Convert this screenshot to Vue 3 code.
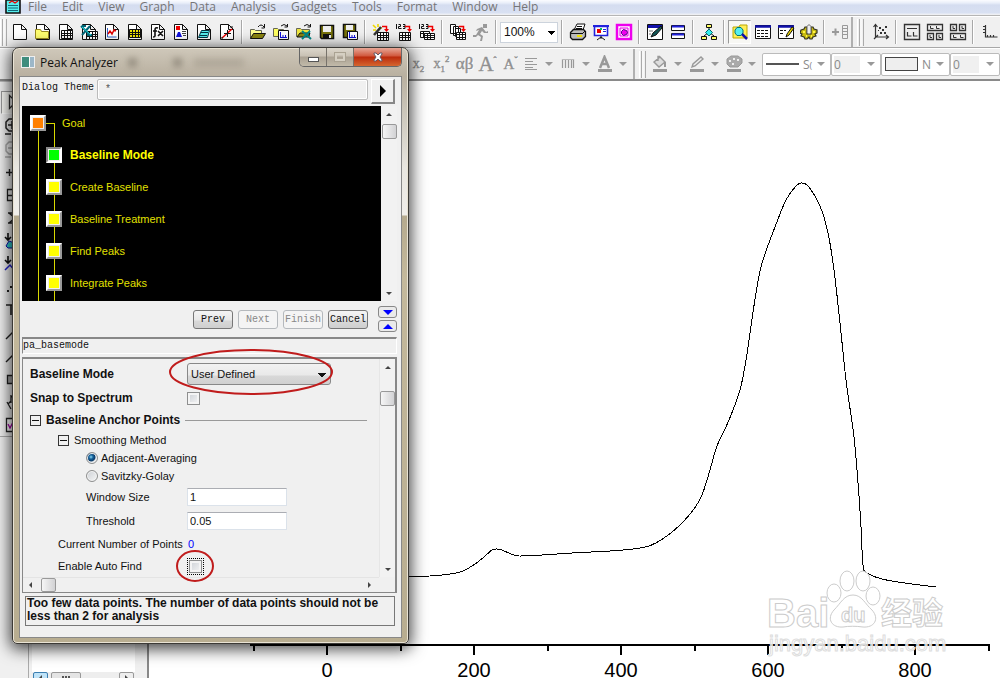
<script setup>
import { h, ref } from 'vue'

const K = '#111'
const G = '#999'
const page = ['M2.5 1.5h8l5 5v10h-13z M10.5 1.5v5h5', '#fff', K]
const grid = (x, y, f) => [`M${x} ${y}h11v8h-11z M${x} ${y + 3}h11 M${x} ${y + 5}h11 M${x + 3} ${y}v8 M${x + 6} ${y}v8 M${x + 9} ${y}v8`, f || '#fff', K]
const redArrow = [['M10 3.500h4.500v4', 'none', '#e00', 1.5], ['M12 6h5l-2.500 3z', '#e00', 'none']]

const icons = {
  page: [page],
  folderPage: [page, ['M1.500 6.500h5l1 2h7v7h-13z', '#ffff70', '#998a20']],
  book: [page, grid(4.5, 7.5)],
  excel: [page, grid(6.5, 8.500), ['M1 3l10 10 M10 3l-8 9 M2 3h4 M7 12h5', 'none', '#067', 2], ['M2 4l9 8', 'none', '#2dd']],
  graph: [page, ['M4.500 5v9h9', 'none', '#36c'], ['M5 11l2-3 2 3 2-4 2 1', 'none', '#d00', 1.5]],
  matrix: [page, grid(3.5, 6.500, '#f5e800')],
  func: [page, ['M9 5q-3-1-3 2v6q0 1-2 1 M4 8h4 M9 8l5 5 M14 8l-5 5', 'none', K, 1.6]],
  layout: [page, ['M4 3h4v4h-4z', '#e00', 'none'], ['M4 14l2-5h2l2 5z', '#11d', 'none'], ['M10 8.500h4 M10 10.500h4 M11 12.500h3', 'none', '#444']],
  notes: [page, ['M6.500 7.500h8l-2 7h-9z M6 9.500h7 M5 12.500h7', '#5ee', '#034']],
  digit: [page, ['M4 15l10-9', 'none', '#e00', 1.5], ['M9.500 7v7 M6 10.500h7 M3 15h2 M12 4h3', 'none', K]],
  open: [['M1.500 15.500v-9h4l1 1h6v3', '#ffff90', '#665'], ['M1.500 15.500l3-5h12l-3 5z', '#8a8410', K], ['M9 4q3-4 6 0 M15.500 1v4h-3', 'none', K]],
  openGraph: [['M1.500 13.500v-8h4l1 1h5v7z', '#ffff60', '#665'], ['M9 3q3-3 6 0 M15.500 1v3h-3', 'none', K], ['M6.500 7.500h10v9h-10z', '#fff', K], ['M8 14.500h7 M8.500 9v5 M11 14v-2 M13.500 14v-2', 'none', '#11d']],
  openExcel: [['M1.500 13.500v-8h4l1 1h8v7z', '#eee640', '#665'], ['M9 3q3-3 6 0 M15.500 1v3h-3', 'none', K], ['M2 14l3-4h10l-2 4z', '#8a8410', K], ['M7 8l9 8 M15 8l-8 8', 'none', '#088', 2]],
  save: [['M2.500 2.500h13v13h-12l-1-1z', '#77720a', K, 1.5], ['M5 3h8v6h-8z', '#eee', 'none'], ['M5 11h8v5h-8z', K, 'none'], ['M11 12h2v3h-2z', '#eee', 'none']],
  saveGraph: [['M2.500 1.500h12v13h-12z', '#77720a', K, 1.5], ['M5 2h7v5h-7z', '#eee', 'none'], ['M6.500 8.500h10v8h-10z', '#fff', K], ['M8 14.500h7 M8.500 9v5 M11 14v-2 M13.500 14v-2', 'none', '#11d']],
  wizard: [['M1 2l3 3 M6 1v3 M1 7h3 M8 5h2', 'none', '#eed800', 1.6], ['M2 12l7-8', 'none', '#333', 2.5], ...redArrow, grid(5.5, 9.500)],
  ascii: [['M1.500 1v5 M3.500 1.500h2v2h-2v2h3 M8 1.500h2v4h-2 M8 3.500h2', 'none', K, 1], ...redArrow, grid(4.5, 9.500)],
  asciiMulti: [['M1.500 1v5 M3.500 1.500h2v2h-2v2h3 M8 1.500h2v4h-2 M8 3.500h2', 'none', K, 1], ...redArrow, ['M2.500 8.500h9v6h-9z M2 10.500h9 M5.500 8v6', '#fff', K], ['M6.500 10.500h10v6h-10z M6 12.500h10 M6 14.500h10 M9.500 10v6 M12.500 10v6', '#fff', K]],
  batch: [['M1.500 1.500h5v9h-5z M4.500 3.500h5v9h-5z M6.500 5.500h5v8h-5z', '#fff', K], ...redArrow, ['M7.500 9.500h9v7h-9z M7 11.500h9 M7 14.500h9 M10.500 9v7 M13.500 9v7', '#fff', K]],
  runner: [['M11 1h4v4h-4z M5 6l5-2 4 5 2-1v2h-4l-2-2-2 3 3 2-1 5H8l1-4-3-2-2 2H1v-2h3l3-5-3 1z', '#999', 'none']],
  printer: [['M5 7l3-6h8l-2 6', '#fff', K], ['M1.500 9.500l3-3h10l2 2v5l-3 3h-10l-2-2z', '#bbb', K, 1.3], ['M8 3.500h5 M7 5.500h6 M2 10.500h12 M14 10l2-2', 'none', K], ['M8 12h5v2h-5z', '#eee200', 'none']],
  slides: [['M1 2h16v2h-16z', '#22d', 'none'], ['M2.500 3.500h13v9h-13z', '#fff', '#22d', 1.6], ['M5 6h4v4h-4z', '#e00', 'none'], ['M8 5h2v2h-2z', '#0b6', 'none'], ['M11 6.500h3 M11 8.500h3', 'none', '#22d'], ['M9 13v3 M5 17l4-3 4 3', 'none', K]],
  magenta: [['M2 2h14v14h-14z', '#fff', '#e0e', 2.500], ['M5 5h8v8h-8z', '#fdf', '#e0e'], ['M8.500 6.500l3 1 1 2-1 2-3 1-2-2v-2z', '#e0e', '#508']],
  codeEdit: [['M1.500 1.500h15v15h-15z', '#fff', K], ['M2 2h14v3h-14z', '#11a', 'none'], ['M5 14l2-4 8-7 1 2-6 7z', '#155', K], ['M3 8h4 M3 11h2', 'none', '#777']],
  rows: [['M2.500 2.500h13v5h-13z M2.500 10.500h13v5h-13z', '#fff', K], ['M3 3.500h12 M3 11.500h12', 'none', '#22d', 2]],
  tree: [['M9 5v4 M9 9l-5 4 M9 9l5 4', 'none', K], ['M6.500 1.500h5v3h-5z M1.500 13.500h5v3h-5z M11.500 13.500h5v3h-5z', '#ff6', K], ['M9 6l3.500 3.500-3.500 3.500-3.500-3.500z', '#3ee', '#066']],
  explorer: [['M2 4h6l1-2h7v13h-14z', '#ffee55', '#bba800'], ['M6 4.500h4l2 2.500v3l-2 2.500h-4l-2-2.500v-3z', '#5ee', '#077'], ['M11 11l5 5', 'none', '#11a', 2.500]],
  results: [['M1.500 2.500h15v13h-15z', '#fff', K], ['M1 3.500h16', 'none', '#11a', 2.500], ['M3 7.500h12 M3 10.500h12 M3 13.500h12', 'none', K, 1, '3 1']],
  command: [['M1.500 2.500h15v13h-15z', '#fff', K], ['M1 3.500h16', 'none', '#11a', 2.500], ['M3 7.500h6 M3 10.500h4', 'none', K, 1, '3 1'], ['M9 14l1-3 5-7 2 1-5 7z', '#eed800', K]],
  gear: [['M1 7l3-1 1-2h2v7h4v-7h2l1 2 3 1v3l-2 1 1 2-3 1-1 2h-2l-1-2-2 2h-2l-1-2-3-1 1-2-2-1z', '#c9bc10', '#332', 1.2], ['M7 3.500l2-2 2 2v6l-2 2-2-2z', '#eee', '#666'], ['M4 8v2 M14 8v2 M6 13h1 M11 13h1', 'none', '#fff44a', 2]],
  addCol: [['M1 9h7 M4.500 5.500v7', 'none', G, 2], ['M11.500 2.500h5v13h-5z M11 5.500h5 M11 8.500h5 M11 11.500h5', 'none', G]],
  scatter: [['M3.500 2v12h13 M1.500 4l2-2.500 2 2.500 M14 12l2.500 2-2.500 2 M2 16l4-4', 'none', '#333', 1.2], ['M7 4h2v2h-2z M10 6h2v2h-2z M13 3h2v2h-2z M8 9h2v2h-2z M12 9h2v2h-2z M6 7h1v1h-1z', '#333', 'none']],
  panel1: [['M1.500 1.500h15v15h-15z', '#eee', '#333', 1.4], ['M4 5.500h10 M4.500 9v4h4 M10.500 9v4h4', 'none', '#333', 1.2]],
  panel4: [['M1.500 1.500h15v6h-15z M1.500 10.500h6v6h-6z M10.500 10.500h6v6h-6z', '#eee', '#333', 1.3], ['M4.500 3v2.500h3 M10.500 3v2.500h3 M4 12v2.500h2 M13 12v2.500h2', 'none', '#333']],
  panel6: [['M1.500 1.500h6v6h-6z M10.500 1.500h6v6h-6z M1.500 10.500h15v6h-15z', '#eee', '#333', 1.3], ['M4 3v2.500h2 M13 3v2.500h2 M4.500 12v2.500h3 M11.500 12v2.500h3', 'none', '#333']],
  axis: [['M5.500 2v12h12 M3 3.500h2 M3 6.500h2 M3 9.500h2 M7.500 14v-2 M10.500 14v-2 M13.500 14v-2', 'none', '#333', 1.2]],
  app: [['M2 0h14v13h-14z', '#5ee', K, 1.6], ['M4 8h10 M4 10.500h10 M4 5.500h10', 'none', '#167'], ['M5 3l3-2 3 2 3-2', 'none', '#e00', 1.3]],
  align: [['M3 3.500h12 M3 6.500h8 M3 9.500h12 M3 12.500h8 M3 14.500h12', 'none', G]],
  barcode: [['M3.500 4v9 M6.500 4v9 M9.500 4v9 M12.500 4v9 M14.500 4v9', 'none', G, 1.2], ['M3 4.500h12', 'none', '#bbb']],
  fontColor: [['M2 14h14v3h-14z', G, 'none'], ['M4 13l4.500-11 4.500 11 M6 9h5', 'none', G, 2.500]],
  bucket: [['M2 14h14v3h-14z', G, 'none'], ['M3 7l6-5 5 5-6 5z M7 6V1.500h2', '#ddd', G, 1.4], ['M14 7v5', 'none', G, 2]],
  pencil: [['M2 14h14v3h-14z', G, 'none'], ['M4 12l1-3 8-7 2 2-8 7z', '#eee', G, 1.4]],
  palette: [['M2 14h14v3h-14z', G, 'none'], ['M2 4l4-3h7l4 3v4l-4 4h-8l-3-3z', '#aaa', G], ['M4 5h2v2h-2z M8 3h2v2h-2z M12 4h2v2h-2z M7 8h2v2h-2z', '#eee', 'none']],
  t0: [['M5.500 1.500v13l3-3 2 5 2-1-2-5h4z', '#fff', '#333', 1.3]],
  t1: [['M4 8h8 M8 4v8 M5 2h6l3 3v6l-3 3h-6l-3-3v-6z M1 17h6', 'none', '#222', 1.5]],
  t2: [['M4 8h8 M5 2h6l3 3v6l-3 3h-6l-3-3v-6z M1 17h6', 'none', '#aaa', 1.5]],
  t3: [['M2 9.500h14 M5.500 6v7', 'none', '#222', 1.4]],
  t4: [['M3.500 3.500h12v11h-12z M4 9.500h9', 'none', '#222', 1.3]],
  t5: [['M5 4l6 5-6 5 M4 4h4 M4 14h4', 'none', '#222', 1.6]],
  t6: [['M4 1v7 M1 5l3 3 3-3', 'none', '#111', 1.6], ['M2 14l3-5 8 3-4 4h-5z', '#3cc', '#11a']],
  t7: [['M4 1v7 M1 5l3 3 3-3', 'none', '#111', 1.6], ['M1 15l5-5 6 7', 'none', '#22c', 1.5]],
  t8: [['M3 12h2v2h-2z M6 8h2v2h-2z M12 10h2v2h-2z', '#222', 'none']],
  t9: [['M2 4h14 M7 4v10', 'none', '#222', 1.6]],
  t10: [['M2 15l12-12', 'none', '#222', 1.5]],
  t11: [['M3.500 5.500h12v8h-12z', '#aaa', '#222', 1.3]],
  t12: [['M3 9l4 7 M7 2v8 M7 4l4-1v6 M4 11l3-3', 'none', '#222', 1.3]],
  t13: [['M2.500 2.500h13v13h-13z', '#fff', '#222', 1.3], ['M4 8l2 4 3-6 3 5', 'none', '#a0a', 1.3]],
}

const Icon = (props) =>
  h('svg', { viewBox: '0 0 18 18', width: 18, height: 18, 'aria-hidden': 'true' },
    icons[props.name].map(([d, f, s, w, dash]) =>
      h('path', { d, fill: f, stroke: s, 'stroke-width': w || 1, 'stroke-dasharray': dash })))
Icon.props = ['name']

const menus = ['File', 'Edit', 'View', 'Graph', 'Data', 'Analysis', 'Gadgets', 'Tools', 'Format', 'Window', 'Help']
const barA = ['page', 'folderPage', 'book', 'excel', 'graph', 'matrix', 'func', 'layout', 'notes', 'digit', '|', 'open', 'openGraph', 'openExcel', 'save', 'saveGraph', '|', 'wizard', 'ascii', 'asciiMulti', '|', 'batch', 'runner', '|']
const barB = ['|', 'printer', 'slides', 'magenta', '|', 'codeEdit', 'rows', '|', 'tree', '|', 'explorer', 'results', 'command', 'gear', '|', 'addCol', '||', 'scatter', '|', 'panel1', 'panel4', 'panel6', '|', 'axis']
const tools = ['t0', 't1', 't2', 't3', 't4', 't5', 't6', 't7', 't8', 't9', 't10', 't10', 't11', 't12', 't13']
const steps = ['Create Baseline', 'Baseline Treatment', 'Find Peaks', 'Integrate Peaks']

const theme = ref('*')
const size = ref('1')
const threshold = ref('0.05')
const method = ref('adjacent')

const samples = [[409, 576], [430, 576], [450, 574], [463, 571], [475, 564], [484, 557], [492, 550], [497, 549], [502, 550], [511, 554], [519, 556], [542, 555], [572, 553], [610, 551], [633, 549], [649, 546], [664, 538], [679, 526], [694, 509], [702, 495], [710, 470], [717, 446], [729, 420], [740, 390], [746, 360], [750, 333], [756, 293], [762, 263], [775, 227], [786, 200], [796, 186], [802, 183], [809, 187], [820, 206], [828, 233], [834, 270], [840, 323], [846, 380], [854, 437], [858, 483], [861, 527], [863, 565], [867, 573], [882, 579], [905, 583], [936, 587]]
const trace = samples.slice(0, -1).map((p1, i) => {
  const p0 = samples[i - 1] || p1
  const p2 = samples[i + 1]
  const p3 = samples[i + 2] || p2
  const c = (a, b, m, sign) => (m + (sign * (b - a)) / 6).toFixed(1)
  return `${i ? '' : `M${p1[0]} ${p1[1]}`}C${c(p0[0], p2[0], p1[0], 1)} ${c(p0[1], p2[1], p1[1], 1)} ${c(p1[0], p3[0], p2[0], -1)} ${c(p1[1], p3[1], p2[1], -1)} ${p2[0]} ${p2[1]}`
}).join('')
const ticks = [['0', 327], ['200', 474], ['400', 621], ['600', 768], ['800', 915]]
const minor = [254, 401, 548, 695, 842, 989]
</script>

<template>
  <div class="app">
    <nav class="menu">
      <Icon name="app" />
      <button v-for="m in menus" :key="m" type="button">{{ m }}</button>
    </nav>

    <div class="bar">
      <span class="grip"></span>
      <template v-for="(n, i) in barA" :key="i">
        <span v-if="n === '|'" class="sep"></span>
        <button v-else type="button" class="tool" :aria-label="n"><Icon :name="n" /></button>
      </template>
      <select class="zoom" aria-label="Zoom"><option>100%</option></select>
      <template v-for="(n, i) in barB" :key="i">
        <span v-if="n === '|'" class="sep"></span>
        <span v-else-if="n === '||'" class="break"><span class="grip"></span></span>
        <button v-else type="button" class="tool" :class="{ on: n === 'explorer' }" :aria-label="n"><Icon :name="n" /></button>
      </template>
    </div>

    <div class="bar format">
      <div class="lead"><span class="grip"></span></div>
      <button type="button" class="tool glyph">x<sub>2</sub></button>
      <button type="button" class="tool glyph">x<sub>1</sub><sup>2</sup></button>
      <button type="button" class="tool glyph greek">αβ</button>
      <button type="button" class="tool glyph big">A<sup>ˆ</sup></button>
      <button type="button" class="tool glyph mid">A<sup>ˇ</sup></button>
      <button type="button" class="tool drop" aria-label="Align"><Icon name="align" /></button>
      <button type="button" class="tool drop" aria-label="Pattern"><Icon name="barcode" /></button>
      <button type="button" class="tool drop" aria-label="Font color"><Icon name="fontColor" /></button>
      <span class="break"><span class="grip"></span></span>
      <button type="button" class="tool drop" aria-label="Fill"><Icon name="bucket" /></button>
      <button type="button" class="tool drop" aria-label="Line color"><Icon name="pencil" /></button>
      <button type="button" class="tool drop" aria-label="Palette"><Icon name="palette" /></button>
      <button type="button" class="combo wide"><i class="rule"></i><span>S<small>(</small></span></button>
      <button type="button" class="combo"><span class="num">0</span></button>
      <button type="button" class="combo wide"><i class="swatch"></i><span>N</span></button>
      <button type="button" class="combo"><span class="num">0</span></button>
    </div>

    <main class="work">
      <div class="side">
        <div class="tools">
          <button v-for="(t, i) in tools" :key="i" type="button" class="tool" :class="{ on: i === 0 }" aria-label="Tool"><Icon :name="t" /></button>
        </div>
      </div>
      <div class="tree-pane">
        <div class="pane">
          <div class="hbar">
            <button type="button" class="blue" aria-label="Left"><i class="left"></i></button>
            <span class="knob"></span>
            <button type="button" aria-label="Right"><i class="right"></i></button>
          </div>
        </div>
      </div>
      <svg class="plot" viewBox="149 81 851 597" preserveAspectRatio="xMinYMin meet">
        <path :d="trace" class="trace" />
        <path d="M250 645H990" class="axis" />
        <path v-for="x in minor" :key="x" :d="`M${x} 645v6`" class="axis" />
        <g v-for="[t, x] in ticks" :key="t">
          <path :d="`M${x} 645v10`" class="axis" />
          <text :x="x" y="677" class="tick">{{ t }}</text>
        </g>
        <g class="mark">
          <text x="767" y="627" class="bai">Bai</text>
          <ellipse cx="834" cy="593" rx="7" ry="9" />
          <ellipse cx="847" cy="581" rx="7" ry="10" />
          <ellipse cx="863" cy="581" rx="7" ry="10" />
          <ellipse cx="873" cy="596" rx="7" ry="9" />
          <path d="M853 595c9 0 12 9 19 15 8 9 2 18-9 17-7-1-14-1-20 0-11 1-17-8-9-17 7-7 10-15 19-15z" />
          <text x="841" y="622" class="du">du</text>
          <text x="881" y="624" class="cn">经验</text>
          <text x="769" y="651" class="url">jingyan.baidu.com</text>
        </g>
      </svg>
    </main>

    <section class="dialog" role="dialog" aria-label="Peak Analyzer">
      <header class="title">
        <i class="logo"></i>
        <h1>Peak Analyzer</h1>
        <div class="ghost"><i></i><i></i><i></i></div>
        <div class="win">
          <button type="button" aria-label="Minimize"><i class="min"></i></button>
          <button type="button" aria-label="Maximize"><i class="max"></i></button>
          <button type="button" class="close" aria-label="Close">
            <svg viewBox="0 0 12 10" width="12" height="10"><path d="M2 1h2l2 2 2-2h2v1L8 5l2 3v1H8L6 7 4 9H2V8l2-3-2-3z" fill="#fff" stroke="#645a68" /></svg>
          </button>
        </div>
      </header>
      <div class="body">
        <div class="theme">
          <label for="theme">Dialog Theme</label>
          <input id="theme" v-model="theme" type="text" />
          <button type="button" aria-label="Theme menu"><i></i></button>
        </div>
        <div class="nav">
          <div class="steps">
            <div class="step root"><button type="button" class="node orange" aria-label="Goal"></button><span>Goal</span></div>
            <div class="step"><button type="button" class="node green" aria-label="Baseline Mode"></button><b>Baseline Mode</b></div>
            <div v-for="s in steps" :key="s" class="step"><button type="button" class="node" :aria-label="s"></button><span>{{ s }}</span></div>
          </div>
          <div class="vscroll"><i class="up"></i><i class="thumb"></i><i class="down"></i></div>
        </div>
        <div class="actions">
          <button type="button">Prev</button>
          <button type="button" disabled>Next</button>
          <button type="button" disabled>Finish</button>
          <button type="button">Cancel</button>
          <div class="pair">
            <button type="button" aria-label="Down"><i class="d"></i></button>
            <button type="button" aria-label="Up"><i class="u"></i></button>
          </div>
        </div>
        <div class="status">pa_basemode</div>
        <div class="panel">
          <form class="form">
            <div class="row r26"><label for="mode" class="strong">Baseline Mode</label>
              <div class="field"><select id="mode"><option>User Defined</option></select>
                <svg class="ring" viewBox="0 0 166 48" width="166" height="48"><ellipse cx="83" cy="24" rx="81" ry="22" /></svg></div></div>
            <div class="row r22"><label for="snap" class="strong">Snap to Spectrum</label><div class="field"><input id="snap" type="checkbox" /></div></div>
            <div class="row r22 section"><button type="button" class="fold" aria-label="Collapse"></button><b>Baseline Anchor Points</b><hr /></div>
            <div class="row r18 in1 section"><button type="button" class="fold" aria-label="Collapse"></button><span>Smoothing Method</span></div>
            <div class="row r18 in2"><input id="adj" v-model="method" type="radio" value="adjacent" /><label for="adj">Adjacent-Averaging</label></div>
            <div class="row r18 in2"><input id="sav" v-model="method" type="radio" value="savitzky" /><label for="sav">Savitzky-Golay</label></div>
            <div class="row r24 in2"><label for="size">Window Size</label><div class="field"><input id="size" v-model="size" type="text" /></div></div>
            <div class="row r24 in2"><label for="thr">Threshold</label><div class="field"><input id="thr" v-model="threshold" type="text" /></div></div>
            <div class="row r22 in1"><span>Current Number of Points</span><div class="field count">0</div></div>
            <div class="row r22 in1"><label for="auto">Enable Auto Find</label>
              <div class="field"><span class="focus"><input id="auto" type="checkbox" /></span>
                <svg class="ring small" viewBox="0 0 40 32" width="40" height="32"><ellipse cx="20" cy="16" rx="18" ry="15" /></svg></div></div>
          </form>
          <div class="vscroll low"><i class="up"></i><i class="thumb"></i><i class="down"></i></div>
          <div class="hscroll"><i class="left"></i><i class="thumb"></i><i class="right"></i></div>
        </div>
        <p class="message">Too few data points. The number of data points should not be less than 2 for analysis</p>
      </div>
    </section>
  </div>
</template>

<style>
html, body, #app { height: 100%; margin: 0; }
body { overflow: hidden; }
</style>

<style scoped>
.app { position: relative; height: 100%; display: flex; flex-direction: column; overflow: hidden; background: #f0f0f0; font: 11px "Liberation Sans", sans-serif; color: #111; }
.app * { box-sizing: border-box; }
button { font: inherit; color: inherit; padding: 0; margin: 0; border: 0; background: none; }
input, select { font: inherit; color: inherit; margin: 0; }
svg { display: block; flex: none; }

.menu { flex: none; height: 16px; padding-left: 4px; display: flex; align-items: flex-start; background: linear-gradient(#fbfcff 0, #e9eef9 3px, #d5ddf0 5px, #d9e1f2 13px, #eceff6 14px, #f0f0f0 15px); border-bottom: 1px solid #b5b5b5; }
.menu svg { margin-right: 6px; }
.menu button { height: 14px; margin-right: 15px; font: 12px/14px "Open Sans", sans-serif; color: #757577; }

.bar { flex: none; height: 32px; display: flex; align-items: center; background: #f0f0f0; border-top: 1px solid #fff; border-bottom: 1px solid #a8a8a8; }
.grip { flex: none; width: 8px; height: 27px; background: linear-gradient(90deg, #fff 1px, #f0f0f0 1px, #f0f0f0 2px, #aaa 2px, #aaa 3px, #f0f0f0 3px, #fff 4px, #f0f0f0 5px, #f0f0f0 6px, #aaa 6px, #aaa 7px, #f0f0f0 7px); }
.tool { flex: none; width: 23px; height: 24px; display: flex; align-items: center; justify-content: center; }
.tool.on { border: 1px solid; border-color: #999 #fff #fff #999; background: #f8f8f4; }
.sep { flex: none; width: 8px; height: 24px; background: linear-gradient(90deg, transparent 3px, #a8a8a8 3px, #a8a8a8 4px, #fff 4px, #fff 5px, transparent 5px); }
.break { flex: none; width: 18px; height: 30px; display: flex; align-items: center; justify-content: flex-end; border-left: 2px solid #b0b0b0; }
.break .grip { margin-right: 4px; }
.zoom { flex: none; width: 58px; height: 21px; appearance: none; border: 1px solid #ccd3dc; padding: 0 3px; font: 12px "Liberation Sans", sans-serif; background: linear-gradient(#000, #000) 47px 8px / 7px 1px no-repeat, linear-gradient(#000, #000) 48px 9px / 5px 1px no-repeat, linear-gradient(#000, #000) 49px 10px / 3px 1px no-repeat, linear-gradient(#000, #000) 50px 11px / 1px 1px no-repeat, #fff; }

.format { height: 33px; border-bottom: 2px solid #8a8a8a; }
.lead { flex: none; width: 407px; }
.glyph { display: block; font: 14px/24px "Liberation Serif", serif; color: #909090; text-shadow: 1px 1px #fff; -webkit-text-stroke: 0.4px #909090; white-space: nowrap; }
.glyph sub, .glyph sup { font-size: 9px; line-height: 1px; }
.greek { font-size: 17px; }
.big { font-size: 21px; }
.mid { font-size: 15px; }
.drop { width: 37px; justify-content: flex-start; gap: 5px; }
.drop::after, .combo::after { content: ""; border: 4px solid transparent; border-top-color: #999; border-bottom: 0; }
.combo { flex: none; width: 50px; height: 23px; display: flex; align-items: center; border: 1px solid #bbb; border-radius: 2px; background: #fff; font: 12px "Open Sans", sans-serif; color: #8a8a8a; padding: 0 5px 0 2px; }
.combo::after { margin-left: auto; }
.combo.wide { width: 69px; gap: 4px; padding-left: 3px; }
.combo small { font-size: 9px; }
.rule { width: 33px; height: 2px; background: #555; }
.swatch { width: 33px; height: 14px; border: 1px solid #444; background: #eee; }
.num { width: 26px; height: 17px; line-height: 17px; background: #f0f0f0; text-align: left; }

.work { flex: 1; min-height: 0; display: flex; background: #fff; }
.side { flex: none; width: 28px; background: #f0f0f0; }
.tools { padding-top: 9px; border-bottom: 1px solid #aaa; border-top: 1px solid #bbb; }
.tools .tool { margin-left: 1px; height: 23px; }
.tree-pane { flex: none; width: 121px; padding: 0 12px 0 3px; background: #f0f0f0; border-left: 1px solid #aaa; border-right: 2px solid #888; }
.pane { height: 100%; display: flex; align-items: flex-end; background: #fff; overflow: hidden; }
.hbar { flex: 1; height: 6px; display: flex; align-items: flex-start; padding: 0 1px; background: #eee; }
.hbar button, .knob { flex: none; width: 15px; height: 16px; border: 1px solid #999; border-radius: 2px; background: #eee; display: flex; justify-content: center; align-items: flex-start; padding-top: 2px; }
.hbar button i { margin: 0; }
.knob { width: 30px; margin: 0 auto 0 3px; background: repeating-linear-gradient(90deg, #555 0, #555 2px, transparent 2px, transparent 3px) 10px 3px / 8px 6px no-repeat, #e4e4e4; }
.hbar .blue { background: #bfe3f8; border-color: #3c7fb1; }
.plot { flex: 1; min-width: 0; width: 100%; height: 100%; align-self: flex-start; }
.trace { fill: none; stroke: #000; stroke-width: 1; shape-rendering: crispEdges; }
.axis { stroke: #000; stroke-width: 2; }
.tick { font: 20px "Liberation Sans", sans-serif; text-anchor: middle; fill: #000; }
.mark { fill: #fff; fill-opacity: .8; stroke: #ccc; stroke-width: 1; font-family: "Liberation Sans", "Noto Sans CJK SC", sans-serif; font-weight: 700; }
.bai { font-size: 40px; }
.du { font-size: 20px; }
.cn { font-size: 31px; }
.url { font-size: 22px; font-weight: 400; stroke: #ddd; }

.dialog { position: absolute; left: 12px; top: 47px; width: 397px; padding: 0 6px 5px; border: 1px solid #3c3a36; border-radius: 7px 7px 5px 5px; box-shadow: 0 3px 16px 2px rgba(0, 0, 0, .75), inset 0 0 0 1px #e9e3d4; background: linear-gradient(#cfc8ba 0, #b9b0a0 28px, #c9c4b8 60px, #e8e6e0 120px, #f0eeea 167px, #b5aa8e 168px, #c4b99c 230px, #b8ad90 100%); }
.title { height: 28px; display: flex; align-items: center; padding-left: 2px; }
.logo { width: 14px; height: 12px; border: 1px solid #eee; background: linear-gradient(90deg, #3f8d7d 7px, #fff 7px, #fff 8px, #9cb7c8 8px); }
.title h1 { margin: 0 0 0 5px; font: 12px "Open Sans", sans-serif; color: #111; }
.ghost { flex: 1; display: flex; gap: 36px; padding-left: 10px; filter: blur(3px); }
.ghost i { width: 9px; height: 9px; background: #7c7568; opacity: .6; }
.ghost i:last-child { width: 50px; margin-left: -24px; opacity: .25; }
.win { align-self: flex-start; display: flex; border: 1px solid #666; border-top: 0; border-radius: 0 0 5px 5px; overflow: hidden; }
.win button { width: 27px; height: 18px; display: flex; align-items: center; justify-content: center; border-right: 1px solid #77726a; background: linear-gradient(#ddd7cc, #c9c1b4 8px, #aaa193 9px, #c2baa9); }
.win .close { width: 47px; border: 0; background: linear-gradient(#e7a797, #d1583d 8px, #bb2a0c 9px, #d5662f); }
.min { width: 11px; height: 5px; margin-top: 4px; border: 1px solid #555; background: #fff; }
.max { width: 10px; height: 8px; border: 2px solid #d5cfc2; outline: 1px solid #aaa292; }
.body { border: 1px solid #888; background: #f0f0f0; padding: 2px 4px 11px 2px; }

.theme { display: flex; align-items: flex-start; height: 27px; font: 10px "Liberation Mono", monospace; }
.theme label { width: 75px; padding-top: 3px; white-space: nowrap; }
.theme input { flex: 1; min-width: 0; height: 21px; margin-right: 3px; padding: 0 7px; border: 1px solid #bbb; border-radius: 2px; box-shadow: inset 0 0 0 1px #fff; background: #f0f0f0; color: #555; }
.theme button { width: 24px; height: 25px; margin-right: 2px; display: flex; align-items: center; justify-content: center; border: solid; border-width: 1px 2px 2px 1px; border-color: #fff #888 #888 #fff; }
.theme button i { border: 6px solid transparent; border-left-color: #000; border-right: 0; }

.nav { display: flex; height: 195px; }
.steps { flex: 1; padding-top: 1px; background: linear-gradient(#d8d800, #d8d800) 16px 20px / 1px 100% no-repeat, linear-gradient(#d8d800, #d8d800) 32px 17px / 1px 100% no-repeat, linear-gradient(#d8d800, #d8d800) 16px 17px / 17px 1px no-repeat, #000; overflow: hidden; color: #e2e000; }
.step { height: 32px; display: flex; align-items: center; gap: 8px; padding-left: 24px; }
.step b { font-size: 12px; color: #ff0; }
.root { padding-left: 8px; }
.root span { margin-left: 8px; }
.node { width: 16px; height: 16px; border: 2px solid; border-color: #fff #999 #999 #fff; background: #ff0; box-shadow: inset 0 0 0 1px #eee; }
.orange { background: #ff8000; }
.green { background: #0f0; border-color: #888 #fff #fff #888; }
.vscroll { width: 16px; display: flex; flex-direction: column; align-items: center; padding: 7px 0 6px; background: #f2f2f2; }
.up, .down, .left, .right { border: 3px solid transparent; }
.up { border-bottom-color: #444; border-top: 0; margin-bottom: 8px; }
.down { border-top-color: #444; border-bottom: 0; margin-top: auto; }
.left { border-right-color: #444; border-left: 0; margin-right: 9px; }
.right { border-left-color: #444; border-right: 0; margin-left: auto; }
.thumb { width: 15px; height: 15px; border: 1px solid #999; border-radius: 2px; background: linear-gradient(90deg, #f6f6f6, #d2d2d4); }

.actions { display: flex; align-items: center; gap: 5px; height: 36px; justify-content: flex-end; font: 10px "Liberation Mono", monospace; }
.actions > button { width: 40px; height: 19px; border: 1px solid #777; border-radius: 3px; background: linear-gradient(#f4f4f4, #e8e8e8 9px, #d8d8d8 10px, #cfcfcf); white-space: nowrap; display: flex; align-items: center; justify-content: center; }
.actions > button:disabled { color: #888; border-color: #b5b9bd; background: #f4f4f4; }
.pair { display: flex; flex-direction: column; gap: 2px; margin-left: 5px; }
.pair button { width: 19px; height: 12px; border: 1px solid #888; border-radius: 3px; background: #eaeaea; display: flex; align-items: center; justify-content: center; }
.d, .u { border: 5px solid transparent; }
.d { border-top-color: #00f; border-bottom: 0; }
.u { border-bottom-color: #00f; border-top: 0; }
.status { height: 17px; border: solid; border-width: 2px 1px 1px; border-color: #888 #fff #fff #888; font: 10px/14px "Liberation Mono", monospace; }

.panel { margin-top: 3px; display: grid; grid-template-columns: 1fr 16px; grid-template-rows: auto 15px; border: solid; border-width: 2px 2px 1px 1px; border-color: #888; }
.form { padding: 2px 12px 0 7px; }
.vscroll.low .up { margin-bottom: 22px; }
.vscroll.low { border-left: 1px solid #e6e6e6; }
.hscroll { grid-column: 1; display: flex; align-items: center; padding: 0 8px 0 6px; border-top: 1px solid #e4e4e4; }
.hscroll .thumb { height: 14px; }
.row { display: flex; align-items: center; white-space: nowrap; }
.r26 { height: 26px; } .r24 { height: 24px; } .r22 { height: 22px; } .r18 { height: 18px; }
.strong, .section b { font-size: 12px; font-weight: 700; }
.in1 { padding-left: 28px; }
.in2 { padding-left: 56px; }
.in2 input[type="radio"] { margin-right: 3px; }
.section { gap: 5px; }
.section hr { flex: 1; height: 1px; margin: 0; border: 0; background: #999; }
.fold { width: 11px; height: 11px; border: 1px solid #333; background: linear-gradient(#111, #111) center / 7px 1px no-repeat; }
.field { position: relative; width: 180px; margin-left: auto; flex: none; display: flex; align-items: center; }
.field select { width: 144px; height: 22px; appearance: none; padding: 0 3px; border: 1px solid #888; border-radius: 3px; background: linear-gradient(#111, #111) 130px 9px / 8px 1px no-repeat, linear-gradient(#111, #111) 131px 10px / 6px 1px no-repeat, linear-gradient(#111, #111) 132px 11px / 4px 1px no-repeat, linear-gradient(#111, #111) 133px 12px / 2px 1px no-repeat, linear-gradient(#f2f2f2, #e9e9e9 11px, #d8d8d8 12px, #d0d0d0); }
.field input[type="text"] { width: 100px; height: 18px; padding: 0 2px; border: 1px solid #dbe2ea; border-top-color: #abadb3; background: #fff; }
.count { color: #00f; padding-left: 1px; }
input[type="checkbox"] { appearance: none; width: 13px; height: 13px; border: 1px solid #8e8f8f; background: linear-gradient(135deg, #ccd0d5, #f6f6f6); box-shadow: inset 0 0 0 2px #f4f4f4; }
.focus { display: flex; padding: 1px; border: 1px dotted #000; }
input[type="radio"] { appearance: none; width: 12px; height: 12px; border: 1px solid #8e8f8f; border-radius: 50%; background: linear-gradient(135deg, #ccd0d5, #f6f6f6); box-shadow: inset 0 0 0 1px #f4f4f4; }
input[type="radio"]:checked { background: radial-gradient(circle at 4px 4px, #8fdcf5, #17639c 2px, #0c3a68 4px, #e0e4e8 5px); }
.ring { position: absolute; left: -19px; top: -15px; fill: none; stroke: #c01c1c; stroke-width: 2; pointer-events: none; }
.ring.small { left: -12px; top: -8px; }
.message { margin: 3px 2px 0 3px; padding: 0 1px 2px; border: 1px solid #777; font-size: 12px; line-height: 13px; font-weight: 700; }
</style>
